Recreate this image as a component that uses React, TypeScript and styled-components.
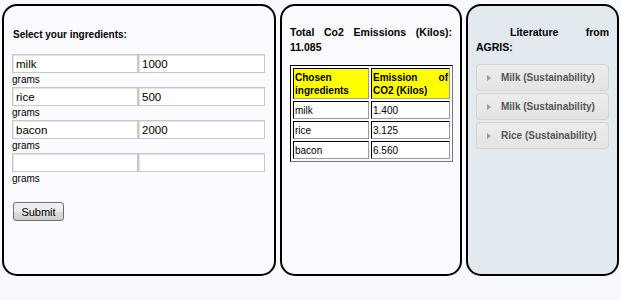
import { FC } from 'react'
import styled, { createGlobalStyle } from 'styled-components'

const GlobalStyle = createGlobalStyle`
  html, body {
    margin: 0;
    padding: 0;
    background: #f8f8ff;
    font-family: 'Liberation Sans', Arial, sans-serif;
    color: #000;
  }
`

const Page = styled.div`
  display: flex;
  gap: 4px;
  padding: 4px 0 0 2px;
  width: 621px;
  height: 300px;
  box-sizing: border-box;
`

const Panel = styled.div<{ $width: number; $tinted?: boolean }>`
  width: ${(p) => p.$width}px;
  height: 272px;
  box-sizing: border-box;
  border: 2px solid #000;
  border-radius: 15px;
  background: ${(p) => (p.$tinted ? '#e2eaef' : '#fafaff')};
  padding: 19px 8px 0 8px;
  display: flex;
  flex-direction: column;
`

const LeftPanel = styled(Panel)`
  padding: 23px 0 0 8px;
`

const Heading = styled.h3<{ $indent?: number }>`
  margin: 0;
  font-size: 10.5px;
  line-height: 15px;
  font-weight: 700;
  text-align: justify;
  text-indent: ${(p) => p.$indent ?? 0}px;
`

const FormHeading = styled.h3`
  margin: 0 0 13px 1px;
  font-size: 10px;
  line-height: 12px;
  font-weight: 700;
`

const Row = styled.div`
  display: flex;
`

const Field = styled.input<{ $width: number }>`
  width: ${(p) => p.$width}px;
  height: 19px;
  box-sizing: border-box;
  margin: 0;
  padding: 0 3px;
  border: 1px solid #c8c8c8;
  box-shadow: inset 1px 1px 0 #e4e4e4;
  background: #fff;
  font-family: 'Liberation Sans', Arial, sans-serif;
  font-size: 11.5px;
  color: #000;
  outline: none;
`

const Unit = styled.div`
  font-size: 10px;
  line-height: 14px;
  height: 14px;
`

const SubmitButton = styled.button`
  margin: 16px 0 0 1px;
  width: 51px;
  height: 19px;
  padding: 0;
  border: 1px solid #707070;
  border-radius: 3px;
  background: linear-gradient(#f2f2f2, #ebebeb 50%, #dddddd 51%, #cfcfcf);
  font-family: 'Liberation Sans', Arial, sans-serif;
  font-size: 11px;
  color: #000;
`

const Table = styled.table`
  margin-top: 10px;
  width: 163px;
  border: 1px solid #000;
  border-right-color: #777;
  border-bottom-color: #777;
  border-spacing: 2px;
  font-size: 10px;
`

const Cell = styled.td<{ $head?: boolean; $width?: number }>`
  border: 1px solid #999;
  border-top-color: #000;
  border-left-color: #000;
  padding: 2px 1px 1px;
  line-height: 13px;
  vertical-align: middle;
  text-align: ${(p) => (p.$head ? 'justify' : 'left')};
  font-weight: ${(p) => (p.$head ? 700 : 400)};
  background: ${(p) => (p.$head ? '#ffff00' : '#fff')};
  width: ${(p) => (p.$width ? `${p.$width}px` : 'auto')};
`

const Accordion = styled.div`
  margin-top: 9px;
  display: flex;
  flex-direction: column;
  gap: 2px;
`

const AccordionHeader = styled.div`
  height: 27px;
  box-sizing: border-box;
  border: 1px solid #d3d3d3;
  border-radius: 4px;
  background: linear-gradient(#ececec, #e4e4e4);
  display: flex;
  align-items: center;
  padding-left: 10px;
  gap: 10px;
  font-size: 10px;
  font-weight: 700;
  color: #555;
`

const Caret = styled.span`
  width: 0;
  height: 0;
  border-top: 3px solid transparent;
  border-bottom: 3px solid transparent;
  border-left: 4px solid #9a9a9a;
`

const ingredients = [
  { name: 'milk', grams: '1000' },
  { name: 'rice', grams: '500' },
  { name: 'bacon', grams: '2000' },
  { name: '', grams: '' },
]

const emissions = [
  { name: 'milk', co2: '1.400' },
  { name: 'rice', co2: '3.125' },
  { name: 'bacon', co2: '6.560' },
]

const literature = ['Milk (Sustainability)', 'Milk (Sustainability)', 'Rice (Sustainability)']

const App: FC = () => {
  return (
    <>
      <GlobalStyle />
      <Page>
        <LeftPanel $width={274}>
          <FormHeading>Select your ingredients:</FormHeading>
          {ingredients.map((item, i) => (
            <div key={i}>
              <Row>
                <Field $width={126} defaultValue={item.name} />
                <Field $width={127} defaultValue={item.grams} />
              </Row>
              <Unit>grams</Unit>
            </div>
          ))}
          <div>
            <SubmitButton>Submit</SubmitButton>
          </div>
        </LeftPanel>

        <Panel $width={182}>
          <Heading>Total Co2 Emissions (Kilos): 11.085</Heading>
          <Table>
            <tbody>
              <tr>
                <Cell $head $width={72}>Chosen ingredients</Cell>
                <Cell $head>Emission of CO2 (Kilos)</Cell>
              </tr>
              {emissions.map((row) => (
                <tr key={row.name}>
                  <Cell>{row.name}</Cell>
                  <Cell>{row.co2}</Cell>
                </tr>
              ))}
            </tbody>
          </Table>
        </Panel>

        <Panel $width={153} $tinted>
          <Heading $indent={34}>Literature from AGRIS:</Heading>
          <Accordion>
            {literature.map((title, i) => (
              <AccordionHeader key={i}>
                <Caret />
                {title}
              </AccordionHeader>
            ))}
          </Accordion>
        </Panel>
      </Page>
    </>
  )
}

export default App
